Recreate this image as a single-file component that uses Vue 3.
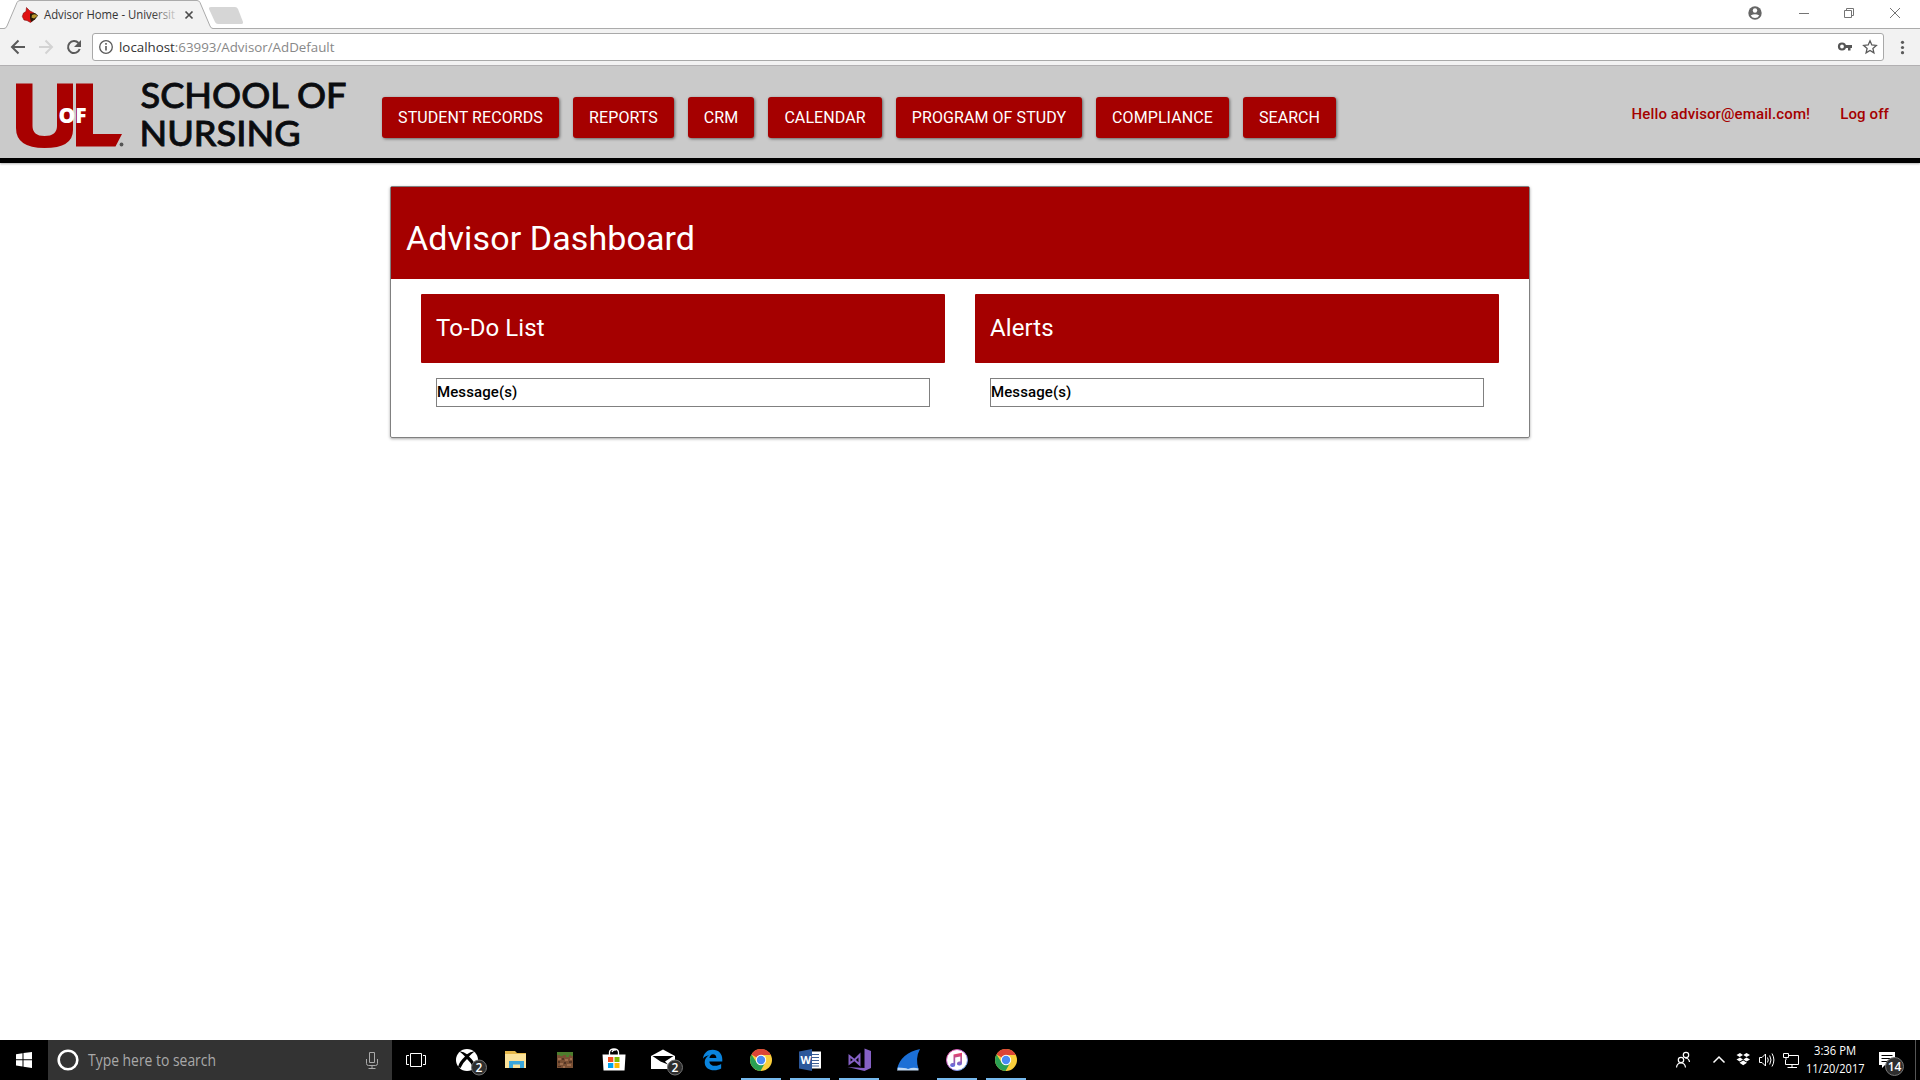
<script setup>
const nav = [
  { label: 'STUDENT RECORDS', width: 177 },
  { label: 'REPORTS', width: 101 },
  { label: 'CRM', width: 66 },
  { label: 'CALENDAR', width: 114 },
  { label: 'PROGRAM OF STUDY', width: 186 },
  { label: 'COMPLIANCE', width: 133 },
  { label: 'SEARCH', width: 93 },
]
const panels = ['To-Do List', 'Alerts']
const apps = [
  { id: 'taskview' }, { id: 'xbox' }, { id: 'files' }, { id: 'minecraft' },
  { id: 'store' }, { id: 'mail' }, { id: 'edge' },
  { id: 'chrome', open: true }, { id: 'word', open: true }, { id: 'vs', open: true },
  { id: 'shark' }, { id: 'itunes', open: true }, { id: 'chrome', open: true },
]
</script>

<template>
  <div class="screen">
    <div class="tabstrip">
      <svg class="tabs" width="260" height="29" viewBox="0 0 260 29">
        <path d="M0 28.5H4Q6 28.500 7 26L17 2.500Q18 .5 20 .5H197Q199 .5 200 2.500L210 26Q211 28.500 213 28.500V29H0Z" fill="#f2f2f2" />
        <path d="M0 28.500H4Q6 28.500 7 26L17 2.500Q18 .5 20 .5H197Q199 .5 200 2.500L210 26Q211 28.500 213 28.500H260" fill="none" stroke="#ababab" />
        <path d="M211 7H235Q237 7 238 9L243 22Q243.500 24 241.500 24H218Q216 24 215 22L209 9Q208.500 7 211 7Z" fill="#d6d6d6" />
        <path d="M26.500 7.500L30 11L34 13L36 16L33 20.500L30.500 22.500L27 20.500L24 20L22.300 16.500L23.500 13L26 11.500Z" fill="#e01010" stroke="#7d0d0d" stroke-width=".6" />
        <path d="M30 13.500L35 13L38 15.500L35 19.500L31 22L30 18Z" fill="#2a1a08" />
        <path d="M32 15Q35.500 13 37.500 16L34 18.500L31.500 17.500Z" fill="#b8962c" />
        <defs>
          <linearGradient id="fade" x1="44" x2="176" y1="0" y2="0" gradientUnits="userSpaceOnUse">
            <stop offset=".82" stop-color="#333" /><stop offset="1" stop-color="#333" stop-opacity=".15" />
          </linearGradient>
        </defs>
        <text x="44" y="19" class="seg" font-size="12" fill="url(#fade)" textLength="131" lengthAdjust="spacingAndGlyphs">Advisor Home - Universit</text>
        <path d="M185.500 11.500L192.500 18.500M192.500 11.500L185.500 18.500" stroke="#4c4c4c" stroke-width="1.700" />
      </svg>
      <svg class="winctl" width="180" height="28" viewBox="1740 0 180 28" fill="none" stroke="#747474">
        <circle cx="1755" cy="13" r="6.700" fill="#666" stroke="none" />
        <circle cx="1755" cy="10.500" r="2.200" fill="#fff" stroke="none" />
        <path d="M1750.700 15.500Q1755 12.800 1759.300 15.500Q1757.800 18 1755 18T1750.700 15.500Z" fill="#fff" stroke="none" />
        <path d="M1799 13.500H1809M1844.500 10.500H1851.500V17.500H1844.500ZM1846.500 10V8.500H1853.500V15.500H1852M1890 8L1900 18M1900 8L1890 18" />
      </svg>
    </div>

    <div class="toolbar">
      <svg class="navicons" width="92" height="36" viewBox="0 29 92 36" fill="none" stroke-width="2">
        <path d="M25 47H12.500M18.500 40.500L12 47L18.500 53.500" stroke="#5a5a5a" />
        <path d="M39 47H51.500M45.500 40.500L52 47L45.500 53.500" stroke="#d3d3d3" />
        <path d="M78.500 43A6 6 0 1 0 79.700 49" stroke="#5a5a5a" />
        <path d="M81 40V47H74Z" fill="#5a5a5a" />
      </svg>
      <div class="omnibox">
        <svg width="260" height="26" viewBox="93 34 260 26">
          <circle cx="106" cy="47" r="6.300" fill="none" stroke="#5a5a5a" stroke-width="1.300" />
          <path d="M106 46V50.500M106 43V44.700" stroke="#5a5a5a" stroke-width="1.600" />
          <text x="119" y="51.500" class="seg" font-size="13.500" fill="#888" textLength="215.500" lengthAdjust="spacingAndGlyphs"><tspan fill="#333">localhost</tspan>:63993/Advisor/AdDefault</text>
        </svg>
        <svg width="60" height="26" viewBox="1823 34 60 26">
          <circle cx="1842" cy="46.500" r="3" fill="none" stroke="#555" stroke-width="2.200" />
          <path d="M1845 45H1852V48H1850.500V50.500H1848V48H1845Z" fill="#555" />
          <path d="M1870 40.800L1871.800 45L1876.300 45.400L1872.900 48.400L1873.900 52.900L1870 50.500L1866.100 52.900L1867.100 48.400L1863.700 45.400L1868.200 45Z" fill="none" stroke="#5a5a5a" stroke-width="1.300" />
        </svg>
      </div>
      <svg class="kebab" width="36" height="36" viewBox="1884 29 36 36" fill="#5a5a5a">
        <circle cx="1902.500" cy="42.300" r="1.600" /><circle cx="1902.500" cy="47.500" r="1.600" /><circle cx="1902.500" cy="52.700" r="1.600" />
      </svg>
    </div>

    <header class="site-header">
      <svg class="logo" width="382" height="92" viewBox="0 66 382 92">
        <path d="M16 83.500H32.500V126Q32.500 136 44.500 136Q57 136 57 126V83.500H73V130Q73 148 44.500 148Q16 148 16 128Z" fill="#a80000" />
        <path d="M76 83.500H93V134H122L115.500 146.500H76Z" fill="#a80000" />
        <circle cx="121.500" cy="144.500" r="1.900" fill="#555" />
        <text x="58.500" y="123" class="of" textLength="28" lengthAdjust="spacingAndGlyphs">OF</text>
        <text x="140.500" y="108.200" class="school" textLength="206" lengthAdjust="spacingAndGlyphs">SCHOOL OF</text>
        <text x="139.500" y="146.200" class="school" textLength="161" lengthAdjust="spacingAndGlyphs">NURSING</text>
      </svg>
      <nav>
        <a v-for="n in nav" :key="n.label" :style="{ width: n.width + 'px' }">{{ n.label }}</a>
      </nav>
      <div class="account"><span>Hello advisor@email.com!</span><span>Log off</span></div>
    </header>

    <main>
      <section class="card">
        <h1>Advisor Dashboard</h1>
        <div class="panels">
          <div v-for="p in panels" :key="p" class="panel">
            <h2>{{ p }}</h2>
            <div class="message">Message(s)</div>
          </div>
        </div>
      </section>
    </main>

    <footer>
      <svg class="start" width="48" height="40" viewBox="0 0 48 40" fill="#fff">
        <path d="M16 14.200L22.500 13.300V19.300H16ZM23.500 13.100L32 12V19.300H23.500ZM16 20.300H22.500V26.500L16 25.600ZM23.500 20.300H32V28L23.500 26.800Z" />
      </svg>
      <svg class="search" width="344" height="40" viewBox="48 0 344 40">
        <circle cx="68" cy="20" r="9.300" fill="none" stroke="#fff" stroke-width="2.600" />
        <text x="88" y="26" class="seg" font-size="15.500" fill="#a9a9a9" textLength="128" lengthAdjust="spacingAndGlyphs">Type here to search</text>
        <path d="M369.500 12.500H374.500V22.500H369.500ZM366.500 19V23.500Q366.500 25.500 368.500 25.500H375.500Q377.500 25.500 377.500 23.500V19M372 25.500V28M368.500 28.500H375.500" fill="none" stroke="#a9a9a9" />
      </svg>
      <div class="apps">
        <div v-for="(a, i) in apps" :key="i" class="app" :class="{ open: a.open }">
          <svg width="40" height="40" viewBox="0 0 40 40">
            <g v-if="a.id === 'taskview'" fill="none" stroke="#fff">
              <path d="M12.500 13.500H23.500V26.500H12.500ZM11 15.500H8.500V24.500H11M25 15.500H27.500V24.500H25" />
            </g>
            <g v-else-if="a.id === 'xbox'">
              <circle cx="20" cy="20" r="11" fill="#fff" />
              <path d="M12.500 11.500Q16 11 20 14.300Q24 11 27.500 11.500Q25.500 13 22 16.500Q28 22 29 27L26.500 28Q24 22.500 20 19Q16 22.500 13.500 28L11 27Q12 22 18 16.500Q14.500 13 12.500 11.500Z" fill="#000" />
            </g>
            <g v-else-if="a.id === 'files'" transform="translate(1 0)">
              <path d="M8 11H18L20 13H29V28H8Z" fill="#e6b84a" />
              <path d="M8 14H29V28H8Z" fill="#fbe29a" />
              <path d="M12 28V21H27V28H23V24.500H16V28Z" fill="#3ba7dc" />
            </g>
            <g v-else-if="a.id === 'minecraft'">
              <path d="M12 12H28V28H12Z" fill="#7a5034" />
              <path d="M12 12H28V16H26V15H24V17H21V15H18V16H15V15H12Z" fill="#4d7d2d" />
              <path d="M13 18H16V20H13ZM20 19H23V21H20ZM25 18H27V20H25ZM15 23H18V25H15ZM22 24H26V26H22ZM18 26H20V28H18Z" fill="#a06e4e" />
              <path d="M17 18H19V20H17ZM13 21H15V23H13ZM19 22H21V24H19ZM24 21H27V23H24ZM13 26H16V27H13Z" fill="#533424" />
            </g>
            <g v-else-if="a.id === 'store'">
              <path d="M8.500 14.500H31.500L30.500 30.500H9.500Z" fill="#fff" />
              <path d="M15.500 15V12Q16 9 20 9T24.500 12V15M18 12Q19 9.500 22 10" fill="none" stroke="#fff" stroke-width="1.300" />
              <path d="M14 17H19.300V22H14Z" fill="#f25022" /><path d="M20.500 17H25.500V22H20.500Z" fill="#7fba00" />
              <path d="M14 23H19.300V28H14Z" fill="#00a4ef" /><path d="M20.500 23H25.500V28H20.500Z" fill="#ffb900" />
            </g>
            <g v-else-if="a.id === 'mail'" fill="#fff">
              <path d="M8 16L20 9.500L32 16V29H8Z" />
              <path d="M9.500 16H30.500L22 21.500L25 24.500L17.500 21.500Z" fill="#000" />
            </g>
            <path v-else-if="a.id === 'edge'" transform="translate(10.500 9.500) scale(.88)" d="M.5 10.500C1.200 4 5.500.2 11.500.2C18.500.2 22.500 5 22.500 11V13.600H7.800C8 17 11 18.600 14.300 18.600C17 18.600 19.200 17.800 21.200 16.600V21.700C19 23 16.200 23.700 13.300 23.700C6.800 23.700 2.500 20.200 2.500 14.500C2.500 11.100 4.400 8.200 7.500 6.600C4.200 7 1.800 8.500.5 10.500ZM7.900 9.600H15.800C15.800 6.800 14.200 5.300 12 5.300C9.600 5.300 8.200 7.300 7.900 9.600Z" fill="#0a84dd" />
            <g v-else-if="a.id === 'chrome'">
              <circle cx="20" cy="20" r="11" fill="#fbcf3b" />
              <path d="M20 20L10.500 14.500A11 11 0 0 1 29.800 15H20Z" fill="#dc4437" />
              <path d="M10.500 14.500A11 11 0 0 0 19.500 31L24.300 22.500L15.700 22.500Z" fill="#2aa053" />
              <circle cx="20" cy="20" r="5.200" fill="#fff" /><circle cx="20" cy="20" r="4.200" fill="#4a8af4" />
            </g>
            <g v-else-if="a.id === 'word'">
              <path d="M19 11.500H31V28.500H19Z" fill="#fff" />
              <path d="M22 14.500H29M22 17.500H29M22 20.500H29M22 23.500H29M22 26H29" stroke="#3d5f94" />
              <path d="M9 11.500L22 9V31L9 28.500Z" fill="#2b579a" />
              <text x="10.500" y="24" class="wletter">W</text>
            </g>
            <g v-else-if="a.id === 'vs'" fill="#8661c5">
              <path d="M25.500 8.500L32 11V28L25.500 31L8.500 27L25.500 28Z" />
              <path d="M10.500 16L15.500 20L20.500 15V24.500L15.500 20L10.500 23.500Z" fill="none" stroke="#8661c5" stroke-width="2" />
            </g>
            <g v-else-if="a.id === 'shark'">
              <path d="M9 29Q13 13 32 9Q27 18 30.500 29Z" fill="#1b6fd6" />
              <path d="M9 30.500L10 27.500Q17 27.500 20 29Q25 27 30.500 28.500V30.500Z" fill="#bdd8f4" />
            </g>
            <g v-else-if="a.id === 'itunes'">
              <defs>
                <linearGradient id="tune" x1="0" x2="1" y1="0" y2="1"><stop stop-color="#e9498d" /><stop offset=".5" stop-color="#b96be0" /><stop offset="1" stop-color="#42b9ee" /></linearGradient>
                <linearGradient id="note" x1="0" x2="0" y1="0" y2="1"><stop stop-color="#ef3e62" /><stop offset="1" stop-color="#5b72e8" /></linearGradient>
              </defs>
              <circle cx="20" cy="20" r="10.500" fill="#fff" stroke="url(#tune)" stroke-width="1" />
              <path d="M16.500 14.500L25 12.700V23.500A2.500 2 0 1 1 23.300 21.600V16.500L18.200 17.600V25A2.500 2 0 1 1 16.500 23.100Z" fill="url(#note)" />
            </g>
            <g v-if="a.id === 'xbox' || a.id === 'mail'">
              <circle cx="32" cy="27.500" r="7.500" fill="#2e2e2e" stroke="#757575" />
              <text x="32" y="31.500" class="badge" text-anchor="middle">2</text>
            </g>
          </svg>
        </div>
      </div>
      <svg class="tray" width="260" height="40" viewBox="1660 0 260 40" fill="none" stroke="#fff">
        <g stroke-width="1.200">
          <circle cx="1681" cy="20" r="2.700" /><path d="M1676.500 27.500Q1677 23 1681 23T1685.500 27.500" />
          <circle cx="1686" cy="15" r="2.700" /><path d="M1685 18Q1689 18 1689.500 22" />
        </g>
        <path d="M1713.500 22.500L1719 17L1724.500 22.500" stroke-width="1.500" />
        <path d="M1740 13L1743 15L1739.700 17L1736.500 15ZM1746.500 13L1750 15L1746.500 17L1743.300 15ZM1740 17.500L1743 19.500L1739.700 21.500L1736.500 19.500ZM1746.500 17.500L1750 19.500L1746.500 21.500L1743.300 19.500ZM1739.500 22.700L1743.200 20.500L1747 22.700L1743.200 25.300Z" fill="#fff" stroke="none" />
        <path d="M1759.500 17.500H1762L1765.500 14V26L1762 22.500H1759.500ZM1767.500 17.500Q1769 20 1767.500 22.500M1769.700 15.500Q1772.300 20 1769.700 24.500M1772 13.500Q1775.800 20 1772 26.500" />
        <path d="M1789 15.500H1798.500V24.500H1785.500V20M1792 24.500V27.500M1787.500 27.500H1797M1783.500 13.500H1788.500V17.500H1783.500ZM1786 17.500V20" />
        <g class="seg" fill="#fff" stroke="none" font-size="12">
          <text x="1814" y="15" textLength="42" lengthAdjust="spacingAndGlyphs">3:36 PM</text>
          <text x="1806" y="33" textLength="58.500" lengthAdjust="spacingAndGlyphs">11/20/2017</text>
        </g>
        <path d="M1879 12H1895V25H1885L1882 28V25H1879Z" fill="#fff" stroke="none" />
        <path d="M1881.500 15.500H1892.500M1881.500 18.500H1892.500M1881.500 21.500H1892.500" stroke="#000" />
        <circle cx="1894.500" cy="26.500" r="9" fill="#2e2e2e" stroke="#757575" />
        <text x="1894.500" y="30.500" class="badge" text-anchor="middle">14</text>
        <path d="M1915.500 0V40" stroke="#555" />
      </svg>
    </footer>
  </div>
</template>

<style>
body { margin: 0; background: #fff; overflow: hidden; }
</style>

<style scoped>
.screen { width: 1920px; height: 1080px; display: flex; flex-direction: column; background: #fff; font-family: Roboto, sans-serif; }
svg { display: block; flex: none; }
.seg { font-family: "Open Sans", "Noto Sans", sans-serif; }
.tabstrip { height: 29px; display: flex; justify-content: space-between; background: linear-gradient(#ababab, #ababab) 0 28px / 100% 1px no-repeat #fff; }
.toolbar { height: 36px; display: flex; background: #f2f2f2; border-bottom: 1px solid #b6b4b6; }
.omnibox { flex: 1; height: 26px; margin-top: 4px; border: 1px solid #a9a9a9; border-radius: 3px; background: #fff; display: flex; justify-content: space-between; }
.site-header { height: 92px; display: flex; background: #cacaca; border-bottom: 5px solid #000; box-shadow: 0 1px 2px rgba(0, 0, 0, .3); }
.of { font: 800 20.500px "Open Sans", sans-serif; fill: #fff; }
.school { font: 500 35px Lato, sans-serif; fill: #0a0c0f; stroke: #0a0c0f; stroke-width: .8px; }
nav { display: flex; gap: 14px; margin-top: 31px; }
nav a { height: 41px; line-height: 41px; text-align: center; white-space: nowrap; background: #a50000; color: #fff; border-radius: 3px; font-size: 16px; letter-spacing: .08px; box-shadow: 1px 1px 3px rgba(0, 0, 0, .5); }
.account { margin-left: auto; margin-right: 31px; display: flex; gap: 30px; line-height: 96px; font-size: 15px; letter-spacing: .12px; font-weight: 500; color: #a50000; white-space: nowrap; }
main { flex: 1; padding-top: 23px; }
.card { box-sizing: border-box; width: 1140px; height: 252px; margin: 0 auto; border: 1px solid #808080; border-radius: 2px; box-shadow: 0 1px 3px rgba(0, 0, 0, .35); }
h1 { margin: 0; height: 92px; padding-left: 15px; line-height: 102px; background: #a50000; color: #fff; font-size: 34px; letter-spacing: .1px; font-weight: 400; }
.panels { display: flex; gap: 30px; padding: 15px 30px 0; }
.panel { flex: 1; }
h2 { margin: 0; height: 69px; padding-left: 15px; line-height: 68px; background: #a50000; color: #fff; font-size: 24px; letter-spacing: .08px; font-weight: 400; border-radius: 1px; }
.message { height: 27px; margin: 15px 15px 0; border: 1px solid #808080; line-height: 27px; font-size: 15px; letter-spacing: .1px; font-weight: 500; color: #000; }
footer { height: 40px; display: flex; background: #000; }
.search { background: #333; }
.apps { display: flex; gap: 9px; margin-left: 6px; }
.app { width: 40px; height: 40px; }
.app.open { box-shadow: inset 0 -2px #76b9ed; }
.wletter { font: 700 11px "Open Sans", sans-serif; fill: #fff; }
.badge { font: 600 12px "Open Sans", sans-serif; fill: #fff; stroke: none; }
.tray { margin-left: auto; }
</style>
